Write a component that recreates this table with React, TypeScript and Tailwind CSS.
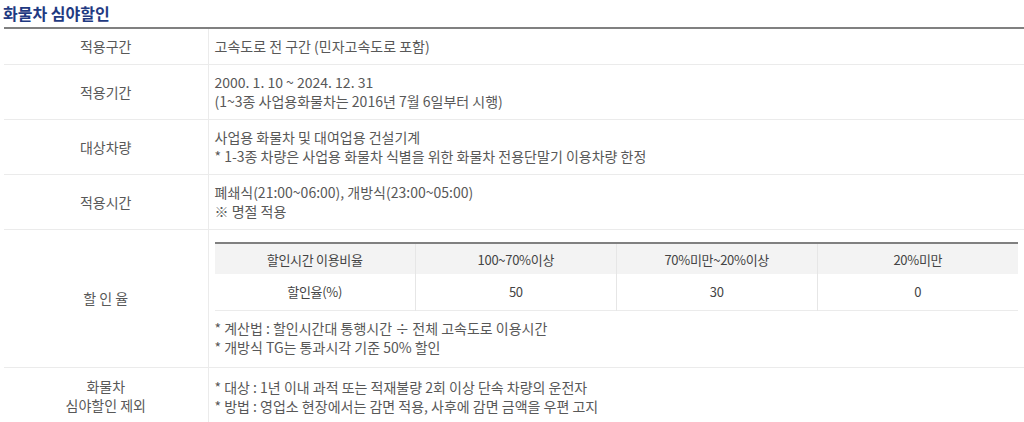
import React from "react";

const font = "font-['Noto_Sans_CJK_KR','Noto_Sans',sans-serif]";

const rows = [
  { label: ["적용구간"], lines: ["고속도로 전 구간 (민자고속도로 포함)"] },
  {
    label: ["적용기간"],
    lines: ["2000. 1. 10 ~ 2024. 12. 31", "(1~3종 사업용화물차는 2016년 7월 6일부터 시행)"],
  },
  {
    label: ["대상차량"],
    lines: [
      "사업용 화물차 및 대여업용 건설기계",
      "* 1-3종 차량은 사업용 화물차 식별을 위한 화물차 전용단말기 이용차량 한정",
    ],
  },
  {
    label: ["적용시간"],
    lines: ["폐쇄식(21:00~06:00), 개방식(23:00~05:00)", "※ 명절 적용"],
  },
];

const heads = ["할인시간 이용비율", "100~70%이상", "70%미만~20%이상", "20%미만"];
const vals = ["할인율(%)", "50", "30", "0"];

function Row({ label, children }: { label: string[]; children: React.ReactNode }) {
  return (
    <tr className="border-b border-[#ebebeb]">
      <th className="w-[204px] border-r border-[#ebebeb] text-center align-middle font-normal leading-[19px] text-[#585858]">
        {label.map((l) => (
          <div key={l}>{l}</div>
        ))}
      </th>
      <td className="px-[6px] py-[8px] align-middle leading-[19px] text-[#585858]">{children}</td>
    </tr>
  );
}

export default function App() {
  return (
    <div className={`${font} h-[422px] w-[1024px] overflow-hidden bg-white text-[14px]`}>
      <h2 className="h-[27px] pl-[3px] pt-[3px] text-[16px] font-bold leading-[20px] text-[#1f3a82]">
        화물차 심야할인
      </h2>
      <div className="pl-[4px]">
        <table className="w-full border-collapse border-t-2 border-[#808080]">
          <tbody>
            {rows.map((r) => (
              <Row key={r.label[0]} label={r.label}>
                {r.lines.map((l) => (
                  <div key={l}>{l}</div>
                ))}
              </Row>
            ))}
            <Row label={["할 인 율"]}>
              <table className="mt-[4px] w-full table-fixed border-collapse border-t-2 border-[#808080] text-[13px] tracking-[-0.3px] text-[#444]">
                <tbody>
                  <tr className="h-[31px] bg-[#f3f3f3]">
                    {heads.map((h, i) => (
                      <td
                        key={h}
                        className={`text-center align-middle ${i < 3 ? "border-r border-[#e6e6e6]" : ""}`}
                      >
                        {h}
                      </td>
                    ))}
                  </tr>
                  <tr className="h-[36px] border-b border-[#ebebeb]">
                    {vals.map((v, i) => (
                      <td
                        key={v}
                        className={`text-center align-middle ${i < 3 ? "border-r border-[#e6e6e6]" : ""}`}
                      >
                        {v}
                      </td>
                    ))}
                  </tr>
                </tbody>
              </table>
              <div className="mb-[2px] mt-[8px]">
                <div>* 계산법 : 할인시간대 통행시간 ÷ 전체 고속도로 이용시간</div>
                <div>* 개방식 TG는 통과시각 기준 50% 할인</div>
              </div>
            </Row>
            <Row label={["화물차", "심야할인 제외"]}>
              <div className="pt-[2px]">* 대상 : 1년 이내 과적 또는 적재불량 2회 이상 단속 차량의 운전자</div>
              <div>* 방법 : 영업소 현장에서는 감면 적용, 사후에 감면 금액을 우편 고지</div>
            </Row>
          </tbody>
        </table>
      </div>
    </div>
  );
}
